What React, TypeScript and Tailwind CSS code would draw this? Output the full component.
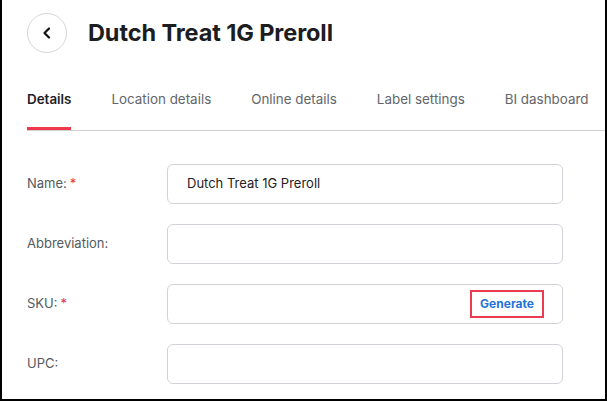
import React from 'react';

const tabs = ['Details', 'Location details', 'Online details', 'Label settings', 'BI dashboard'];

const Field: React.FC<{ label: string; required?: boolean; value?: string; action?: React.ReactNode }> = ({ label, required, value, action }) => (
  <div className="flex items-center h-[40px]">
    <div className="w-[140px] text-[13px] text-[#555a60]">
      {label}
      {required && <span className="text-[#e5333f] ml-[3px]">*</span>}
    </div>
    <div className="w-[396px] h-[40px] rounded-[6px] border border-[#cfd2d6] bg-white flex items-center justify-between pl-[19px] pr-[18px]">
      <span className="text-[13px] text-[#1f2124]">{value}</span>
      {action}
    </div>
  </div>
);

const App: React.FC = () => {
  return (
    <div
      className="w-[607px] h-[401px] bg-white border-l-[2px] border-r-[2px] border-b-[2px] border-black overflow-hidden"
      style={{ fontFamily: 'Inter, "Liberation Sans", sans-serif' }}
    >
      {/* header */}
      <div className="flex items-center pl-[25px] pt-[12px] h-[53px]">
        <button className="w-[40px] h-[40px] rounded-full border border-[#d6d6d6] flex items-center justify-center">
          <svg width="14" height="14" viewBox="0 0 14 14" fill="none">
            <path d="M9 2.5L4.5 7L9 11.5" stroke="#111" strokeWidth="2.2" strokeLinecap="round" strokeLinejoin="round" />
          </svg>
        </button>
        <h1 className="ml-[21px] text-[23.5px] font-bold text-[#1c1d1f] tracking-[-0.1px]">Dutch Treat 1G Preroll</h1>
      </div>

      {/* tabs */}
      <div className="ml-[25px] mt-[16px] flex border-b border-[#cfcfcf] h-[62px]">
        {tabs.map((t, i) => (
          <div
            key={t}
            className={`flex items-center h-full text-[13.4px] ${i === 0 ? 'font-semibold text-[#1f2124] border-b-[3px] border-[#f0384b] -mb-px pt-[3px]' : 'text-[#62666b]'} ${i < tabs.length - 1 ? 'mr-[40px]' : ''}`}
          >
            {t}
          </div>
        ))}
      </div>

      {/* form */}
      <div className="pl-[25px] pt-[33px] flex flex-col gap-[20px]">
        <Field label="Name:" required value="Dutch Treat 1G Preroll" />
        <Field label="Abbreviation:" />
        <Field
          label="SKU:"
          required
          action={
            <span className="border-[2px] border-[#ec3a4f] px-[8px] py-[3px] text-[12px] font-bold text-[#1f73d8]">Generate</span>
          }
        />
        <Field label="UPC:" />
      </div>
    </div>
  );
};

export default App;
